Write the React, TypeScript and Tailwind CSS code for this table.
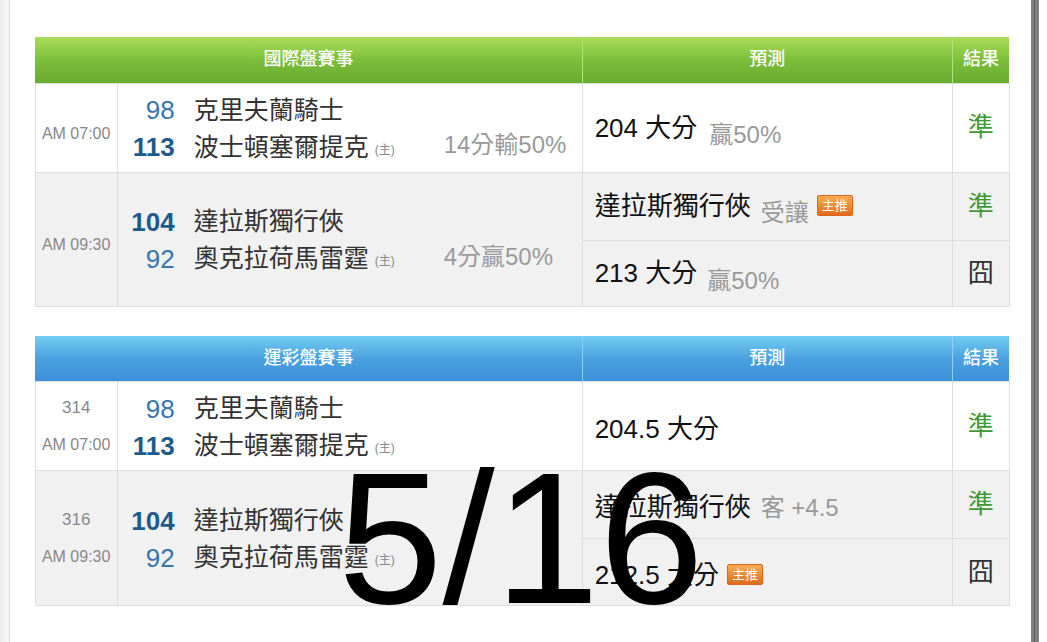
import React from 'react';

const sans = "font-['Liberation_Sans','Noto_Sans_CJK_TC',sans-serif]";

const Badge = () => (
  <span className="inline-block align-[5px] ml-[8px] px-[4px] h-[21px] leading-[20px] rounded-[2px] bg-gradient-to-b from-[#f7ab52] to-[#e06b17] text-white text-[13px] border border-[#d9661a]">
    主推
  </span>
);

const Hit = () => <span className="text-[#3f9a36]">準</span>;
const Miss = () => <span className="text-[#333]">囧</span>;

interface TeamsProps {
  top: string;
  topName: string;
  bottom: string;
  bottomName: string;
  bold: 'top' | 'bottom';
  note?: string;
}

const Teams = ({ top, topName, bottom, bottomName, bold, note }: TeamsProps) => (
  <div className="flex items-center pt-[3px]">
    <div className="flex flex-col w-[326px]">
      <div className="flex items-center h-[37px]">
        <span className={`w-[57px] text-right text-[26px] ${bold === 'top' ? 'font-semibold text-[#1f5a8c]' : 'text-[#3676ad]'}`}>{top}</span>
        <span className="ml-[19px] text-[25px] text-[#333]">{topName}</span>
      </div>
      <div className="flex items-center h-[37px]">
        <span className={`w-[57px] text-right text-[26px] ${bold === 'bottom' ? 'font-semibold text-[#1f5a8c]' : 'text-[#3676ad]'}`}>{bottom}</span>
        <span className="ml-[19px] text-[25px] text-[#333]">{bottomName}</span>
        <span className="ml-[6px] mt-[4px] text-[12px] text-[#888]">(主)</span>
      </div>
    </div>
    {note && <div className="self-end mb-[3px] text-[24px] text-[#9a9a9a]">{note}</div>}
  </div>
);

const Time = ({ no, time }: { no?: string; time: string }) => (
  <div className={`flex flex-col items-center gap-[13px] text-[#888] ${no ? '' : 'pt-[12px]'}`}>
    {no && <span className="text-[17px]">{no}</span>}
    <span className="text-[16px]">{time}</span>
  </div>
);

const Header = ({ title, color }: { title: string; color: 'green' | 'blue' }) => {
  const bg =
    color === 'green'
      ? 'bg-gradient-to-b from-[#a9dd58] via-[#7cbf3b] to-[#68ab2e]'
      : 'bg-gradient-to-b from-[#72cdf1] via-[#4aa0e0] to-[#3d8fd8]';
  const line = color === 'green' ? 'border-[#b6e07c]' : 'border-[#8ed0f3]';
  return (
    <tr className={`h-[46px] ${bg} text-white text-[18px]`}>
      <th colSpan={2} className={`border-r ${line} font-medium`}>{title}</th>
      <th className={`border-r ${line} font-medium`}>預測</th>
      <th className="font-medium">結果</th>
    </tr>
  );
};

const Cols = () => (
  <colgroup>
    <col className="w-[82px]" />
    <col className="w-[465px]" />
    <col className="w-[370px]" />
    <col className="w-[57px]" />
  </colgroup>
);

const td = 'border border-[#dedede]';
const pred = `${td} pl-[12px] pt-[6px] text-[26px] text-[#111]`;

export default function App() {
  return (
    <div className={`relative flex h-[642px] w-[1047px] overflow-hidden bg-white ${sans}`}>
      <div className="w-[10px] bg-gradient-to-r from-[#ececec] to-[#f8f8f8] border-r border-[#d8d8d8]" />

      <div className="flex-1 pl-[25px] pr-[21px] pt-[37px] flex flex-col gap-[29px]">
        <table className="w-[974px] table-fixed border-collapse">
          <Cols />
          <thead>
            <Header title="國際盤賽事" color="green" />
          </thead>
          <tbody>
            <tr className="h-[89px] bg-white">
              <td className={td}><Time time="AM 07:00" /></td>
              <td className={td}>
                <Teams top="98" topName="克里夫蘭騎士" bottom="113" bottomName="波士頓塞爾提克" bold="bottom" note="14分輸50%" />
              </td>
              <td className={pred}>
                204 大分<span className="ml-[12px] text-[24px] text-[#999] align-[-6px]">贏50%</span>
              </td>
              <td className={`${td} text-center text-[26px]`}><Hit /></td>
            </tr>
            <tr className="h-[68px] bg-[#f1f1f1]">
              <td rowSpan={2} className={td}><Time time="AM 09:30" /></td>
              <td rowSpan={2} className={td}>
                <Teams top="104" topName="達拉斯獨行俠" bottom="92" bottomName="奧克拉荷馬雷霆" bold="top" note="4分贏50%" />
              </td>
              <td className={pred}>
                達拉斯獨行俠<span className="ml-[10px] text-[24px] text-[#999] align-[-6px]">受讓</span>
                <Badge />
              </td>
              <td className={`${td} text-center text-[26px]`}><Hit /></td>
            </tr>
            <tr className="h-[66px] bg-[#f1f1f1]">
              <td className={pred}>
                213 大分<span className="ml-[10px] text-[24px] text-[#999] align-[-7px]">贏50%</span>
              </td>
              <td className={`${td} text-center text-[26px]`}><Miss /></td>
            </tr>
          </tbody>
        </table>

        <table className="w-[974px] table-fixed border-collapse">
          <Cols />
          <thead>
            <Header title="運彩盤賽事" color="blue" />
          </thead>
          <tbody>
            <tr className="h-[89px] bg-white">
              <td className={td}><Time no="314" time="AM 07:00" /></td>
              <td className={td}>
                <Teams top="98" topName="克里夫蘭騎士" bottom="113" bottomName="波士頓塞爾提克" bold="bottom" />
              </td>
              <td className={pred}>204.5 大分</td>
              <td className={`${td} text-center text-[26px]`}><Hit /></td>
            </tr>
            <tr className="h-[68px] bg-[#f1f1f1]">
              <td rowSpan={2} className={td}><Time no="316" time="AM 09:30" /></td>
              <td rowSpan={2} className={td}>
                <Teams top="104" topName="達拉斯獨行俠" bottom="92" bottomName="奧克拉荷馬雷霆" bold="top" />
              </td>
              <td className={pred}>
                達拉斯獨行俠<span className="ml-[10px] text-[24px] text-[#999]">客 +4.5</span>
              </td>
              <td className={`${td} text-center text-[26px]`}><Hit /></td>
            </tr>
            <tr className="h-[67px] bg-[#f1f1f1]">
              <td className={pred}>
                212.5 大分<Badge />
              </td>
              <td className={`${td} text-center text-[26px]`}><Miss /></td>
            </tr>
          </tbody>
        </table>
      </div>

      <div className="w-[9px] bg-[#808080] flex justify-center">
        <div className="w-[1px] bg-[#5e5e5e]" />
      </div>
      <div className="w-[8px] bg-white" />

      {/* date stamp drawn over the table */}
      <div className="absolute left-[338px] top-[444px] text-[188px] leading-none text-black font-['Liberation_Sans',sans-serif] pointer-events-none">
        5/16
      </div>
    </div>
  );
}
